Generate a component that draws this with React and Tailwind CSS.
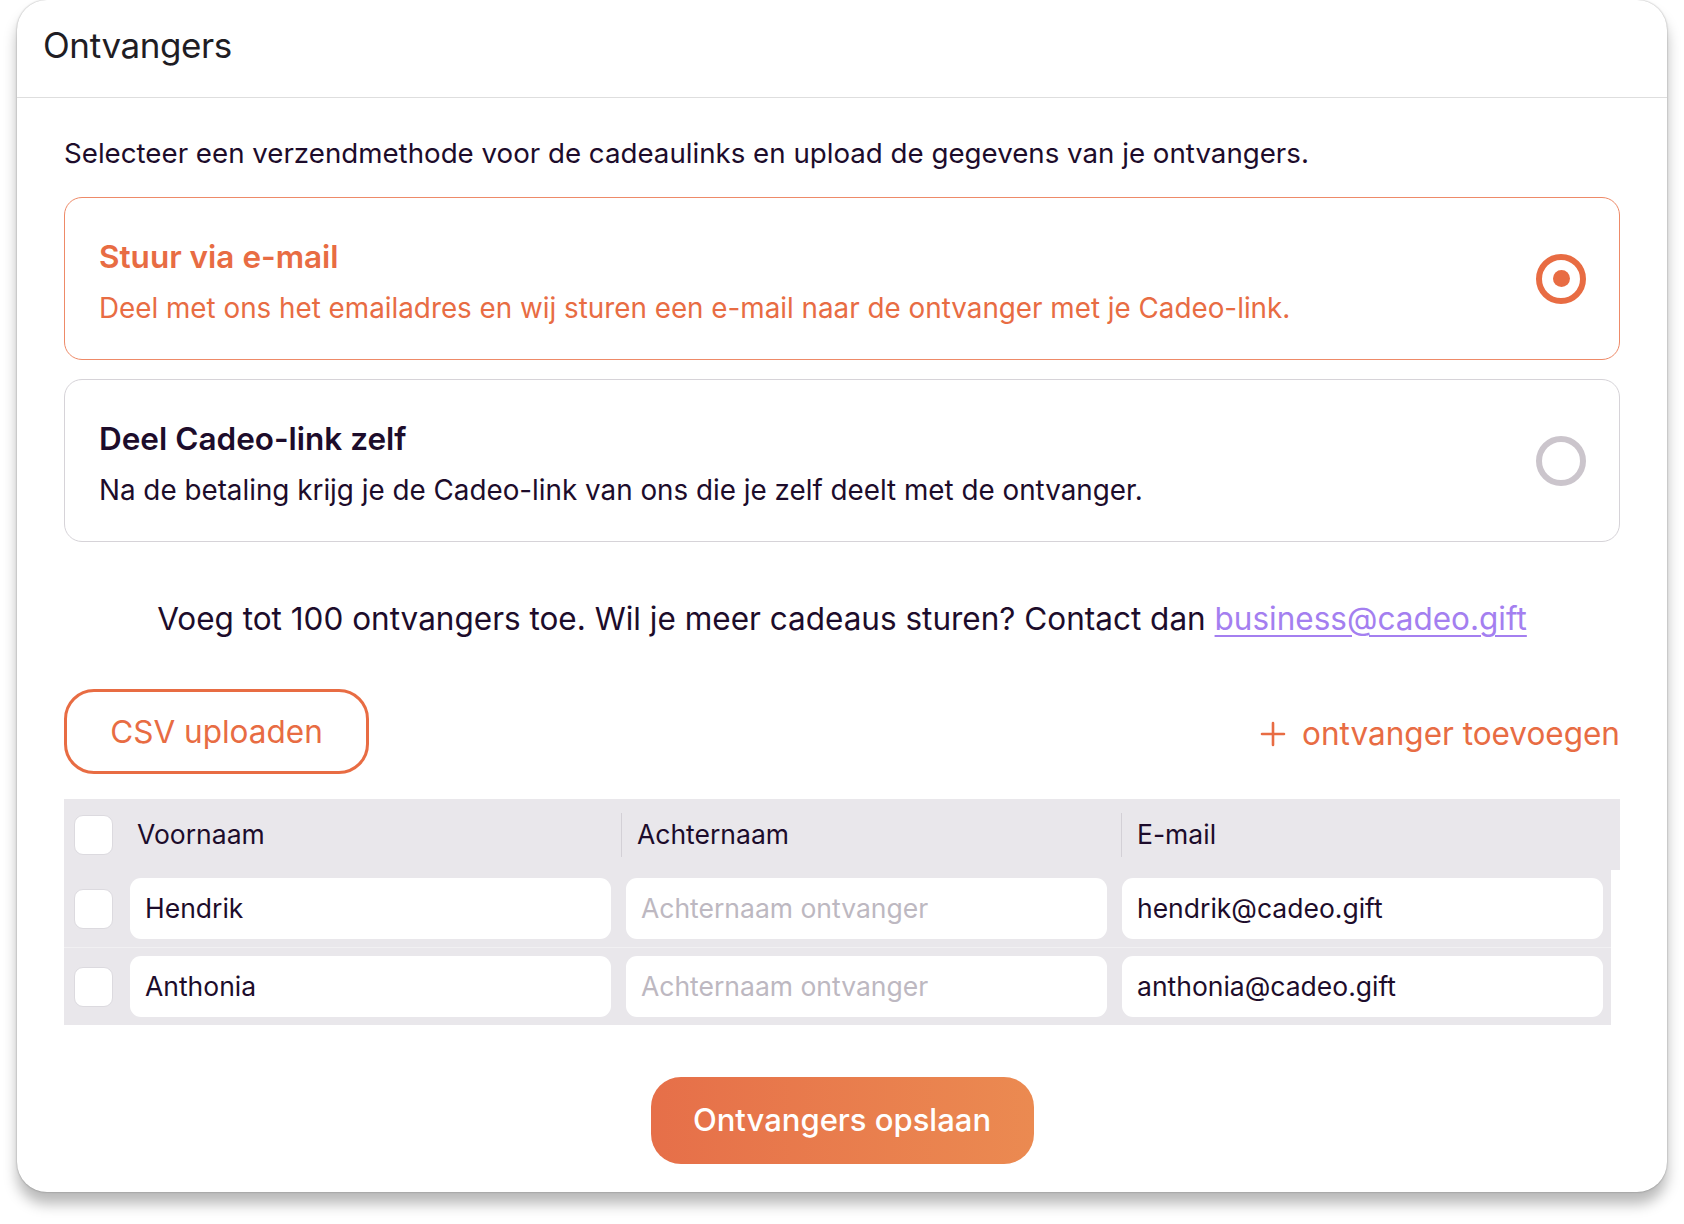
import React, { useState } from "react";

const ORANGE = "text-[#e86c43]";

const Radio = ({ checked }) =>
  checked ? (
    <div className="w-[50px] h-[50px] rounded-full border-[6px] border-[#e86c43] flex items-center justify-center shrink-0">
      <div className="w-[17px] h-[17px] rounded-full bg-[#e86c43]" />
    </div>
  ) : (
    <div className="w-[50px] h-[50px] rounded-full border-[6px] border-[#cbc5cc] shrink-0" />
  );

const Option = ({ title, text, checked, onClick }) => (
  <div
    onClick={onClick}
    className={`h-[163px] rounded-[18px] border flex items-center justify-between pl-[34px] pr-[33px] cursor-pointer ${
      checked ? "border-[#ee8a68]" : "border-[#d6d3d8]"
    }`}
  >
    <div className="flex flex-col gap-[16px] pt-[6px]">
      <div
        className={`text-[31.5px] leading-[36px] font-semibold ${
          checked ? "text-[#e86c43]" : "text-[#1d0c2b]"
        }`}
      >
        {title}
      </div>
      <div
        className={`text-[27.8px] leading-[34px] ${
          checked ? "text-[#e86c43]" : "text-[#1d0c2b]"
        }`}
      >
        {text}
      </div>
    </div>
    <Radio checked={checked} />
  </div>
);

const Checkbox = () => (
  <div className="w-[39px] h-[40px] rounded-[9px] bg-white border border-[#dcdadf] shrink-0" />
);

const Field = ({ value, placeholder }) => (
  <div className="w-[481px] h-[61px] rounded-[11px] bg-white flex items-center px-[15px] text-[26.5px]">
    {value ? (
      <span className="text-[#1d0c2b]">{value}</span>
    ) : (
      <span className="text-[#bdb8c1]">{placeholder}</span>
    )}
  </div>
);

const rows = [
  { first: "Hendrik", email: "hendrik@cadeo.gift" },
  { first: "Anthonia", email: "anthonia@cadeo.gift" },
];

export default function App() {
  const [method, setMethod] = useState("email");

  return (
    <div
      className="w-[1684px] h-[1224px] bg-white px-[17px]"
      style={{ fontFamily: "Inter, 'Noto Sans', sans-serif" }}
    >
      <div className="h-[1192px] rounded-[30px] bg-white shadow-[0_0_2px_rgba(0,0,0,0.35),0_12px_14px_rgba(0,0,0,0.28)] flex flex-col">
        <div className="h-[98px] border-b border-[#dedede] pl-[26px] pt-[25px]">
          <h1 className="text-[35px] leading-[40px] text-[#1f1d24] tracking-[-0.4px]">Ontvangers</h1>
        </div>

        <div className="px-[47px] flex flex-col">
          <p className="mt-[38px] text-[27.7px] leading-[34px] text-[#1d0c2b]">
            Selecteer een verzendmethode voor de cadeaulinks en upload de gegevens van je ontvangers.
          </p>

          <div className="mt-[27px] flex flex-col gap-[19px]">
            <Option
              title="Stuur via e-mail"
              text="Deel met ons het emailadres en wij sturen een e-mail naar de ontvanger met je Cadeo-link."
              checked={method === "email"}
              onClick={() => setMethod("email")}
            />
            <Option
              title="Deel Cadeo-link zelf"
              text="Na de betaling krijg je de Cadeo-link van ons die je zelf deelt met de ontvanger."
              checked={method === "self"}
              onClick={() => setMethod("self")}
            />
          </div>

          <p className="mt-[57px] text-center text-[31.5px] leading-[40px] text-[#1d0c2b]">
            Voeg tot 100 ontvangers toe. Wil je meer cadeaus sturen? Contact dan{" "}
            <a href="#" className="text-[#a47ff0] underline underline-offset-[5px] decoration-[2px]">
              business@cadeo.gift
            </a>
          </p>

          <div className="mt-[50px] flex items-center justify-between">
            <button className={`w-[305px] h-[85px] rounded-[30px] border-[3px] border-[#e86c43] ${ORANGE} text-[31.5px]`}>
              CSV uploaden
            </button>
            <button className={`flex items-center gap-[16px] ${ORANGE} text-[31.5px] mt-[5px]`}>
              <svg width="26" height="26" viewBox="0 0 26 26" fill="none">
                <path d="M13 2v22M2 13h22" stroke="#e86c43" strokeWidth="2.6" strokeLinecap="round" />
              </svg>
              ontvanger toevoegen
            </button>
          </div>

          <div className="mt-[25px] flex flex-col">
            <div className="h-[71px] bg-[#e9e7eb] flex items-center text-[26.5px] text-[#1d0c2b]">
              <div className="w-[57px] pl-[10px] flex items-center">
                <Checkbox />
              </div>
              <div className="w-[500px] pl-[16px]">Voornaam</div>
              <div className="w-[500px] flex items-center">
                <div className="w-px h-[44px] bg-[#d3d0d6]" />
                <div className="pl-[15px]">Achternaam</div>
              </div>
              <div className="flex-1 flex items-center">
                <div className="w-px h-[44px] bg-[#d3d0d6]" />
                <div className="pl-[15px]">E-mail</div>
              </div>
            </div>
            <div className="w-[1547px] bg-[#e9e7eb] flex flex-col">
              {rows.map((r, i) => (
                <div
                  key={r.email}
                  className={`flex items-center py-[8px] pl-[10px] ${i > 0 ? "border-t border-[#f1f0f2]" : ""}`}
                >
                  <Checkbox />
                  <div className="ml-[17px] flex gap-[15px]">
                    <Field value={r.first} />
                    <Field placeholder="Achternaam ontvanger" />
                    <Field value={r.email} />
                  </div>
                </div>
              ))}
            </div>
          </div>

          <div className="mt-[52px] flex justify-center">
            <button className="w-[383px] h-[87px] rounded-[30px] bg-gradient-to-r from-[#e66f49] to-[#eb8a51] text-white text-[31px] font-medium">
              Ontvangers opslaan
            </button>
          </div>
        </div>
      </div>
    </div>
  );
}
